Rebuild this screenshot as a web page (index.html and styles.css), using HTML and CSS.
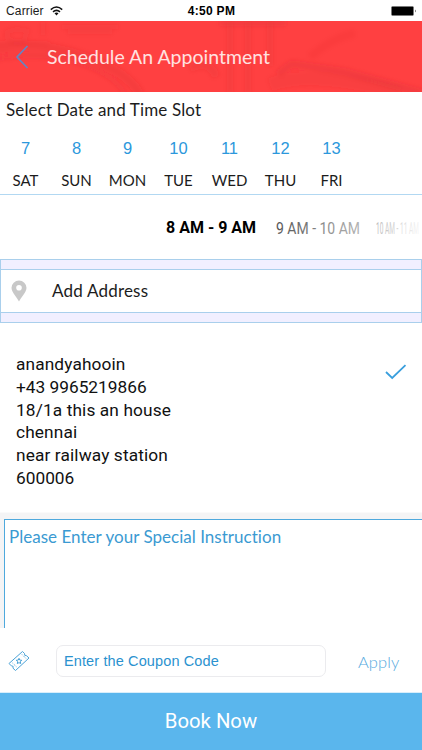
FILE: index.html
```html
<!DOCTYPE html>
<html lang="en">
<head>
<meta charset="utf-8">
<title>Schedule An Appointment</title>
<link rel="stylesheet" href="styles.css">
</head>
<body>
<div class="status">
  <div class="carrier"><span>Carrier</span>
    <svg width="13" height="10" viewBox="0 0 13 10" fill="none" stroke="#111" stroke-width="1.5"><path d="M.8 3.6Q6.5-1.7 12.2 3.6M3 5.9Q6.5 2.8 10 5.9"/><path d="M6.5 9.4 4.5 7.3Q6.5 5.9 8.500 7.300Z" fill="#111" stroke="none"/></svg>
  </div>
  <span class="clock">4:50 PM</span>
  <svg class="battery" width="26" height="10" viewBox="0 0 26 10"><rect x=".5" y=".5" width="22" height="9" rx="1" fill="#000" stroke="#777" stroke-width=".6"/><path d="M24 3.500Q25.500 5 24 6.500Z" fill="#222"/></svg>
</div>
<header class="header">
  <svg class="scene" width="422" height="72" viewBox="0 0 422 72">
    <defs><filter id="soft"><feGaussianBlur stdDeviation="2"/></filter></defs>
    <g filter="url(#soft)" fill="none" stroke="#c92c30">
      <path d="M-5 27Q40 20 85 36T140 74" stroke-width="9" opacity=".16"/>
      <path d="M-5 38Q50 30 85 44T126 76" stroke-width="3" opacity=".2"/>
      <path d="M-5 22H50M0 31 70 36" stroke-width="2" opacity=".16"/>
      <path d="M5 13Q14 6 27 10L24 20Q12 24 5 13M43 1V14M62 6H118M68 11H112" stroke-width="5" opacity=".11"/>
      <path d="M230 0V72M248 0V72M270 0V45" stroke-width="6" opacity=".14"/>
      <path d="M220 2H286" stroke-width="6" opacity=".2"/>
      <path d="M278 53 292 43 345 51 422 72" stroke-width="7" opacity=".2"/>
      <path d="M270 64Q310 48 400 72" stroke-width="14" opacity=".11"/>
      <path d="M190 47Q210 38 216 56" stroke-width="8" opacity=".14"/>
      <path d="M310 36Q330 18 355 12" stroke-width="8" opacity=".07"/>
    </g>
  </svg>
  <svg class="back" width="14" height="24" viewBox="0 0 14 24" fill="none" stroke="#6486c4" stroke-width="1.700"><path d="M12.500 1 2 12 12.500 23"/></svg>
  <h1>Schedule An Appointment</h1>
</header>
<section class="dates">
  <h2><span class="pick">Select Date and Time Slot</span></h2>
  <div class="days">
    <div class="day"><b>7</b><span>SAT</span></div>
    <div class="day"><b>8</b><span>SUN</span></div>
    <div class="day"><b>9</b><span>MON</span></div>
    <div class="day"><b>10</b><span>TUE</span></div>
    <div class="day"><b>11</b><span>WED</span></div>
    <div class="day"><b>12</b><span>THU</span></div>
    <div class="day"><b>13</b><span>FRI</span></div>
  </div>
</section>
<section class="slots">
  <span class="current">8 AM - 9 AM</span>
  <svg class="next" width="85" height="22" viewBox="0 0 85 22"><defs><linearGradient id="mid"><stop stop-color="#555"/><stop offset="1" stop-color="#b5b5b5"/></linearGradient></defs><text x="0" y="17" textLength="84" lengthAdjust="spacingAndGlyphs" fill="url(#mid)">9 AM - 10 AM</text></svg>
  <svg class="later" width="45" height="22" viewBox="0 0 45 22"><defs><linearGradient id="fade"><stop stop-color="#bbb"/><stop offset="1" stop-color="#f4f4f4"/></linearGradient></defs><text x="0" y="17" textLength="43" lengthAdjust="spacingAndGlyphs" fill="url(#fade)">10 AM - 11 AM</text></svg>
</section>
<section class="add">
  <div class="add-row">
    <svg class="pin" width="16" height="22" viewBox="0 0 16 22"><path d="M8 21.500C6 17.500.5 12.500.5 7.800a7.500 7.300 0 0 1 15 0C15.500 12.500 10 17.500 8 21.500ZM8 5a2.800 2.800 0 1 0 0 5.600A2.800 2.800 0 0 0 8 5Z" fill="#c8c8c8" fill-rule="evenodd"/></svg>
    <span class="add-text">Add Address</span>
  </div>
</section>
<section class="address">
  <p>anandyahooin<br><span class="phone">+43 9965219866</span><br>18/1a this an house<br>chennai<br>near railway station<br><span class="phone">600006</span></p>
  <svg class="check" width="22" height="16" viewBox="0 0 22 16" fill="none" stroke="#3a9fdd" stroke-width="1.800"><path d="M1 8 7.200 14 20.500 1.200"/></svg>
</section>
<section class="notes"><div class="field"><span class="hint">Please Enter your Special Instruction</span></div></section>
<section class="coupon">
  <svg class="ticket" width="22" height="22" viewBox="0 0 22 22" fill="none" stroke="#4ba3d8" stroke-width="1" stroke-linejoin="round"><path d="M1 13.500 14.500 1.500 16.500 3.500Q16 6 18.500 5.700L21 8 7.500 20.500 5 18.200Q6 15.600 3.400 15.900Z"/><path d="M14 4.500 18 8.500M4.500 13 9 17.300" stroke-dasharray="1 1.200"/><path d="m11 8.300.8 1.800 2 .2-1.500 1.300.4 2-1.700-1-1.700 1 .4-2-1.500-1.300 2-.2Z"/></svg>
  <div class="code"><span>Enter the Coupon Code</span></div>
  <span class="apply">Apply</span>
</section>
<footer class="book"><span>Book Now</span></footer>
</body>
</html>
```
FILE: styles.css
```css
* { box-sizing: border-box; }
body { margin: 0; width: 422px; height: 750px; overflow: hidden; background: #fff; font-family: Lato, sans-serif; color: #1c1c1c; display: flex; flex-direction: column; }
body > * { flex: none; }
svg { display: block; flex: none; }
h1, h2, p { margin: 0; font-weight: 400; }
span { white-space: nowrap; }
.status { height: 21px; display: grid; grid-template-columns: 1fr auto 1fr; align-items: center; padding: 1px 5px 0 6px; font: 12px/18px "Liberation Sans", sans-serif; }
.carrier { display: flex; align-items: center; gap: 6px; letter-spacing: .15px; }
.clock { font-weight: 700; color: #000; letter-spacing: .3px; }
.battery { justify-self: end; }
.header { position: relative; height: 71px; background: #ff4041; display: flex; align-items: center; padding: 1px 0 0 15px; overflow: hidden; }
.scene { position: absolute; left: 0; top: 0; }
.back { position: relative; }
.header h1 { position: relative; margin-left: 18px; font-size: 19.500px; line-height: 26px; color: #ffe2e1; font-variant-ligatures: none; }
.dates { height: 103px; border-bottom: 1px solid #b2d8f2; padding-top: 7px; }
.dates h2 { font-size: 17px; line-height: 22px; padding-left: 6px; letter-spacing: .15px; }
.days { display: grid; grid-template-columns: repeat(7, 51px); margin-top: 16px; }
.day { display: flex; flex-direction: column; align-items: center; }
.day b { font: 16.500px/22px "Liberation Sans", sans-serif; color: #2c98dc; }
.day span { font-size: 15px; line-height: 20px; margin-top: 11px; }
.slots { height: 64px; display: flex; align-items: center; padding: 2px 0 0 166px; font: 16px/22px Roboto, sans-serif; overflow: hidden; }
.current { color: #000; font-weight: 700; }
.next { margin-left: 20px; }
.later { margin-left: 15px; }
.add { height: 64px; background: #f1efff; border: 1px solid #a9cfec; padding: 9px 0; }
.add-row { height: 44px; background: #fff; border: solid #a9cfec; border-width: 1px 0; display: flex; align-items: center; padding-left: 10px; }
.add-text { margin-left: 25px; font-size: 17px; line-height: 22px; letter-spacing: .2px; }
.address { height: 190px; display: flex; justify-content: space-between; align-items: flex-start; padding: 30px 15px 0 16px; border-bottom: 1px solid #fafafa; }
.address p { font: 17.300px/22.800px Roboto, sans-serif; color: #111; letter-spacing: .12px; }
.phone { letter-spacing: 0; }
.check { margin-top: 11px; }
.notes { height: 115px; background: #f4f4f5; padding: 6px 0 0 4px; }
.field { height: 109px; background: #fff; border: solid #4ea9dd; border-width: 1px 0 0 1px; padding: 6px 0 0 4px; font-size: 17px; line-height: 22px; color: #3b9ad2; letter-spacing: .03px; }
.coupon { height: 65px; display: flex; align-items: center; padding: 2px 0 0 8px; border-bottom: 1px solid #d8eefb; }
.code { width: 270px; height: 32px; margin-left: 26px; border: 1px solid #ebebee; border-radius: 7px; padding-left: 7px; font: 14.500px/30px "Liberation Sans", sans-serif; color: #2b92cf; letter-spacing: .12px; }
.apply { margin: 2px 0 0 32px; font-size: 16.500px; font-weight: 300; color: #55a9de; letter-spacing: .1px; }
.book { height: 57px; background: #5ab6ed; color: #fff; text-align: center; font: 20.300px/57px Roboto, sans-serif; }
```
